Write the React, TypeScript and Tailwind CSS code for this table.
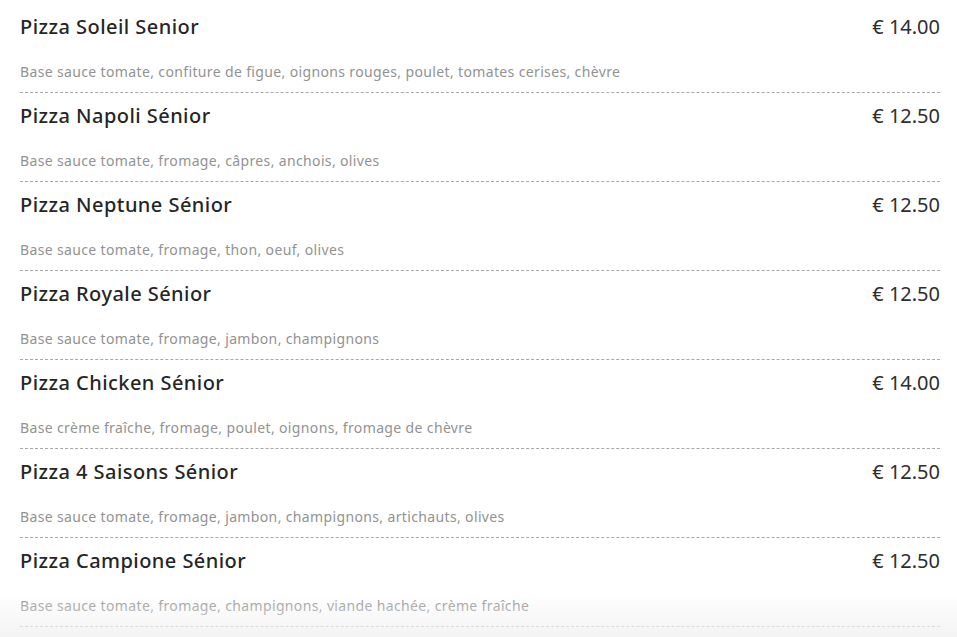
const pizzas = [
    { name: "Pizza Soleil Senior", price: "14.00", desc: "Base sauce tomate, confiture de figue, oignons rouges, poulet, tomates cerises, chèvre" },
    { name: "Pizza Napoli Sénior", price: "12.50", desc: "Base sauce tomate, fromage, câpres, anchois, olives" },
    { name: "Pizza Neptune Sénior", price: "12.50", desc: "Base sauce tomate, fromage, thon, oeuf, olives" },
    { name: "Pizza Royale Sénior", price: "12.50", desc: "Base sauce tomate, fromage, jambon, champignons" },
    { name: "Pizza Chicken Sénior", price: "14.00", desc: "Base crème fraîche, fromage, poulet, oignons, fromage de chèvre" },
    { name: "Pizza 4 Saisons Sénior", price: "12.50", desc: "Base sauce tomate, fromage, jambon, champignons, artichauts, olives" },
    { name: "Pizza Campione Sénior", price: "12.50", desc: "Base sauce tomate, fromage, champignons, viande hachée, crème fraîche" },
];

const MenuRow = ({ name, price, desc }: { name: string; price: string; desc: string }) => {
    return (
        <div className="pt-[9px] pb-[10px] border-b border-dashed border-[#a8a8a8]">
            <div className="flex justify-between items-center h-[28px]">
                <h3 className="text-[20px] font-medium tracking-[0.45px] text-[#262626]">{name}</h3>
                <span className="text-[20px] text-[#2e2e2e]">€ {price}</span>
            </div>
            <p className="mt-[21px] h-[20px] leading-[20px] text-[14px] tracking-[0.36px] text-[#929292]">{desc}</p>
        </div>
    );
};

export default function App() {
    return (
        <div className="relative w-[957px] h-[637px] overflow-hidden bg-white" style={{ fontFamily: '"Noto Sans", sans-serif' }}>
            <div className="pt-[4px] pl-[20px] pr-[17px]">
                {pizzas.map((p) => (
                    <MenuRow key={p.name} {...p} />
                ))}
            </div>
            <div className="absolute left-0 right-0 bottom-0 h-[45px] bg-gradient-to-b from-white/0 to-[#f2f2f2]/90 pointer-events-none" />
        </div>
    );
}
